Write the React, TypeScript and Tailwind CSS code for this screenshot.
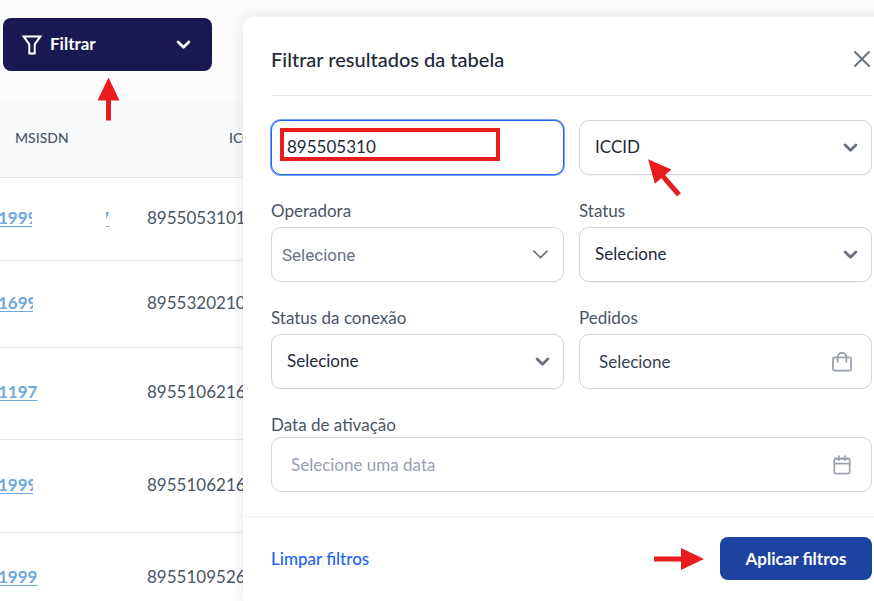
import { useState } from "react";
import type { ReactNode } from "react";
import { clsx } from "clsx";

const ROWS = [
  { msisdn: "1999", iccid: "8955053101", height: "h-[83px]", link: "w-[34px]", tail: "7" },
  { msisdn: "1699", iccid: "8955320210", height: "h-[87px]", link: "w-[35px]" },
  { msisdn: "1197", iccid: "8955106216", height: "h-[92px]", link: "w-10" },
  { msisdn: "1999", iccid: "8955106216", height: "h-[93px]", link: "w-[35px]" },
  { msisdn: "1999", iccid: "8955109526", height: "h-[92px]", link: "w-10" },
];

const BOX = "block w-full h-[55px] rounded-[10px] border border-gray-300 bg-white text-[17px] outline-none";

function FunnelIcon() {
  return (
    <svg className="w-5 h-5" viewBox="0 0 20 20" fill="none" stroke="currentColor" strokeWidth="2" strokeLinejoin="miter">
      <path d="M1.6 1.4h16.8L12.7 9.4v9.2H7.3V9.4z" />
    </svg>
  );
}

function Chevron({ thin = false, className }: { thin?: boolean; className?: string }) {
  return (
    <svg className={clsx("w-4 h-4 pointer-events-none", className)} viewBox="0 0 16 16" fill="none" stroke="currentColor" strokeLinecap="round" strokeLinejoin="round">
      {thin ? <path strokeWidth="1.7" d="M2 4.2 8.5 10.7l6.5-6.5" /> : <path strokeWidth="2.8" d="M3.1 5 8.5 10.2 13.9 5" />}
    </svg>
  );
}

function BagIcon() {
  return (
    <svg className="w-5 h-5" viewBox="0 0 20 20" fill="none" stroke="currentColor" strokeWidth="1.8" strokeLinecap="round" strokeLinejoin="round">
      <rect x="1" y="5.3" width="18" height="13.4" rx="1.6" />
      <path d="M5.6 9.8V5.2a4.4 4.4 0 0 1 8.8 0v4.6" />
    </svg>
  );
}

function CalendarIcon() {
  return (
    <svg className="w-5 h-5" viewBox="0 0 20 20" fill="none" stroke="currentColor" strokeWidth="1.7" strokeLinecap="round" strokeLinejoin="round">
      <rect x="2.3" y="3.3" width="15.4" height="15.4" rx="1.6" />
      <path d="M2.3 8.7h15.4M6.9 1.2v4M13.1 1.2v4M3 4h14" />
    </svg>
  );
}

function Field({ id, label, className, children }: { id: string; label: string; className?: string; children: ReactNode }) {
  return (
    <div className={clsx("flex flex-col", className)}>
      <label htmlFor={id} className="text-[17px] leading-6 text-gray-600">{label}</label>
      <div className="relative">{children}</div>
    </div>
  );
}

function Select({ id, value, label }: { id: string; value: string; label?: string }) {
  return (
    <>
      <select id={id} aria-label={label} defaultValue={value} className={clsx(BOX, "appearance-none pb-0.5 pl-[15px] pr-10 text-gray-800 shadow-xs")}>
        <option>{value}</option>
      </select>
      <Chevron className="absolute right-3.5 top-5 text-gray-500" />
    </>
  );
}

function LineTable() {
  return (
    <table className="w-full table-fixed border-collapse text-left">
      <thead>
        <tr className="h-[77px] bg-slate-50 border-b border-gray-200 text-sm text-gray-600">
          <th className="w-[147px] pl-[15px] font-medium">MSISDN</th>
          <th className="pl-[82px] font-medium">ICCID</th>
        </tr>
      </thead>
      <tbody className="text-[17px] text-gray-600">
        {ROWS.map((r, i) => (
          <tr key={i} className={clsx("border-b border-gray-200", r.height)}>
            <td className="pb-0.5">
              <div className="-ml-0.5 flex items-center">
                <a href="#" className={clsx("overflow-hidden font-bold text-[#6fa8dc] underline underline-offset-2", r.link)}>{r.msisdn}</a>
                {r.tail && (
                  <span className="ml-[74px] flex w-[3px] justify-end overflow-hidden font-bold text-[#6fa8dc] underline underline-offset-2">{r.tail}</span>
                )}
              </div>
            </td>
            <td className="pb-0.5">{r.iccid}</td>
          </tr>
        ))}
      </tbody>
    </table>
  );
}

function FilterPanel() {
  const [search, setSearch] = useState("895505310");

  return (
    <section role="dialog" aria-label="Filtrar resultados da tabela" className="absolute left-[243px] -right-[26px] top-[17px] rounded-xl bg-white pb-7 shadow-[0_0_16px_rgba(0,0,0,0.1)]">
      <header className="mx-7 flex h-[79px] items-center justify-between border-b border-gray-200 pt-1.5">
        <h2 className="text-xl font-medium text-gray-800">Filtrar resultados da tabela</h2>
        <button type="button" aria-label="Fechar" className="text-gray-500">
          <svg className="w-5 h-5" viewBox="0 0 20 20" fill="none" stroke="currentColor" strokeWidth="2" strokeLinecap="round">
            <path d="m3 3 14 14M17 3 3 17" />
          </svg>
        </button>
      </header>

      <form>
        <div className="grid grid-cols-2 gap-x-[15px] gap-y-6 px-7 py-6">
          <div className="relative">
            <input aria-label="Buscar" value={search} onChange={(e) => setSearch(e.target.value)}
              className="block h-[55px] w-full rounded-[10px] border border-[#1c64f2] bg-white pb-0.5 pl-[15px] text-[17px] text-gray-800 outline-none ring-1 ring-[#1c64f2]/60" />
            <div className="pointer-events-none absolute left-[9px] top-2 h-[33px] w-[220px] border-4 border-[#e81c1c]" />
          </div>
          <div className="relative"><Select id="tipo" label="Tipo de busca" value="ICCID" /></div>

          <Field id="operadora" label="Operadora" className="gap-1">
            <select id="operadora" className={clsx(BOX, "appearance-none pl-2.5 pr-10 pt-0.5 font-[Roboto] text-gray-500")}>
              <option>Selecione</option>
            </select>
            <Chevron thin className="absolute right-4 top-5 text-gray-500" />
          </Field>
          <Field id="status" label="Status" className="gap-1"><Select id="status" value="Selecione" /></Field>

          <Field id="conexao" label="Status da conexão" className="gap-1"><Select id="conexao" value="Selecione" /></Field>
          <Field id="pedidos" label="Pedidos" className="gap-1">
            <input id="pedidos" placeholder="Selecione" className={clsx(BOX, "pl-[19px] pr-12 placeholder:text-gray-700")} />
            <span className="pointer-events-none absolute right-5 top-[18px] text-gray-400"><BagIcon /></span>
          </Field>

          <Field id="data" label="Data de ativação" className="col-span-2">
            <input id="data" placeholder="Selecione uma data" className={clsx(BOX, "pl-[19px] pr-12 placeholder:text-gray-400")} />
            <span className="pointer-events-none absolute right-5 top-[18px] text-gray-400"><CalendarIcon /></span>
          </Field>
        </div>

        <footer className="flex items-center justify-between border-t border-gray-100 px-7 pt-5">
          <button type="reset" className="text-[17px] font-medium text-[#1c64f2]">Limpar filtros</button>
          <button type="button" className="h-[43px] w-[152px] rounded-lg bg-[#1e429f] text-[17px] font-bold text-white">Aplicar filtros</button>
        </footer>
      </form>
    </section>
  );
}

function Arrow({ className }: { className: string }) {
  return (
    <svg className={clsx("pointer-events-none absolute h-[22px] fill-[#e81c1c]", className)} viewBox="0 0 50 22" preserveAspectRatio="xMaxYMid slice">
      <path d="M0 8.5h27V0l23 11-23 11v-8.5H0z" />
    </svg>
  );
}

export default function App() {
  return (
    <main className="relative h-screen overflow-hidden bg-white font-[Lato,sans-serif]">
      <div className="h-[100px] bg-[#fcfcfc] pl-[3px] pt-[18px]">
        <button type="button" className="flex h-[53px] w-[209px] items-center rounded-lg bg-[#1a1852] pl-[19px] pr-[21px] text-[17px] font-bold text-white">
          <FunnelIcon />
          <span className="ml-2 pb-0.5">Filtrar</span>
          <Chevron className="ml-auto" />
        </button>
      </div>
      <LineTable />
      <FilterPanel />

      {/* Callout arrows over the steps */}
      <Arrow className="left-[87px] top-[88px] w-[43px] -rotate-90" />
      <Arrow className="left-[640px] top-[166px] w-[47px] -rotate-[131deg]" />
      <Arrow className="left-[654px] top-[548px] w-[50px]" />
    </main>
  );
}
